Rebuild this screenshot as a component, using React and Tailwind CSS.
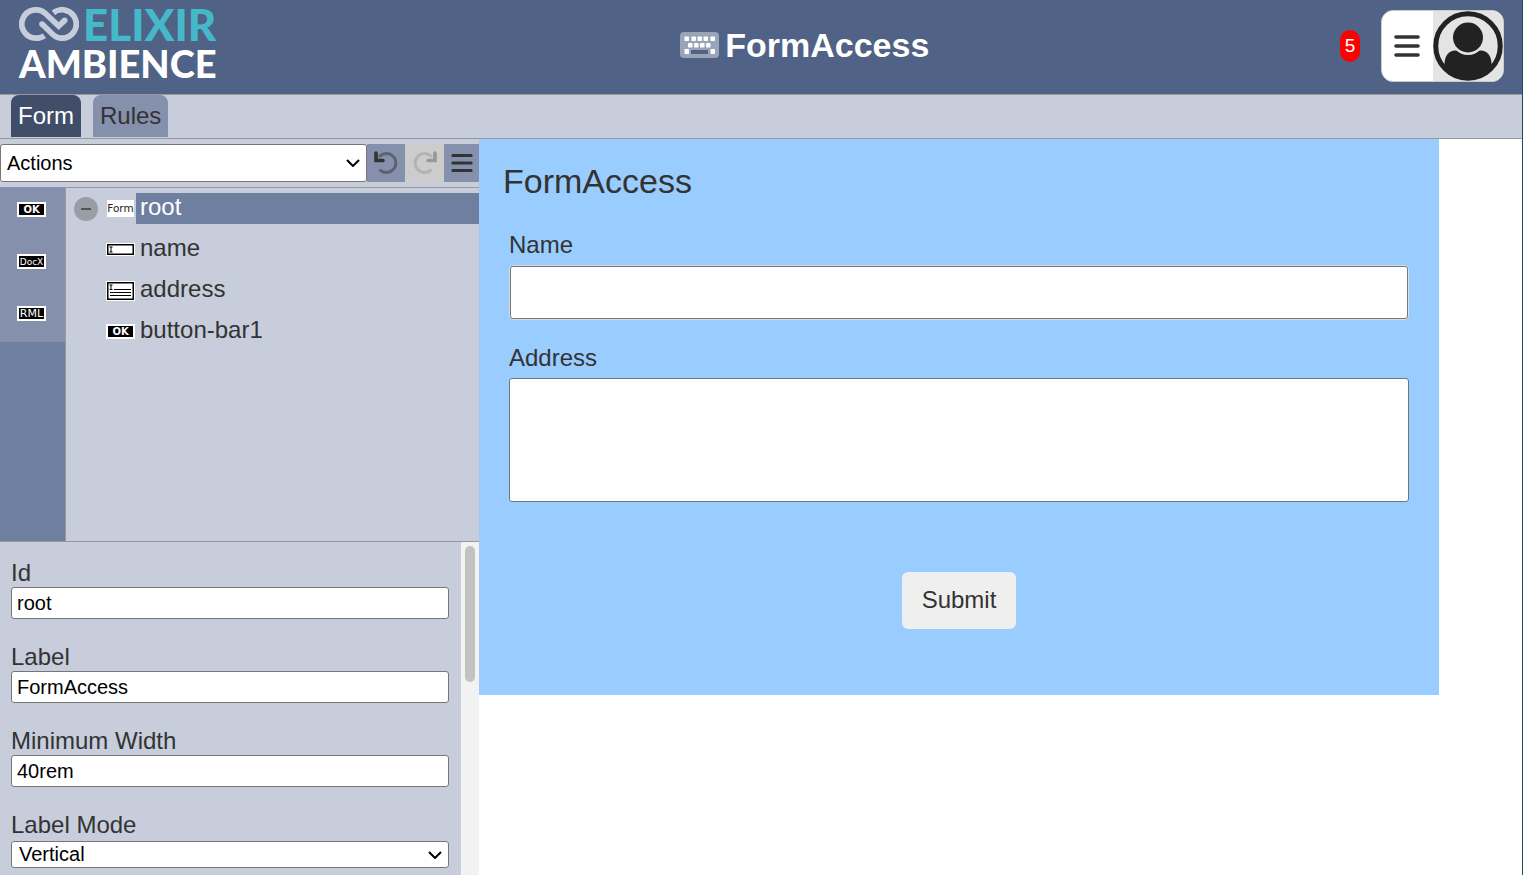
import React from "react";

function Logo() {
  return (
    <div className="flex flex-col self-start pt-1 font-['Lato',sans-serif] font-black text-white">
      <div className="flex h-10 items-center gap-1 text-[44px] leading-10 text-[#45b9c9]">
        <svg viewBox="0 0 180 102" className="mb-px h-[34px] w-[60px]" fill="none" stroke="#c7cddb" strokeWidth="17" aria-hidden="true">
          <path d="M76 86C68 92 60 93.500 51 93.500A42.500 42.500 0 1 1 81 21L119 57L137 40" />
          <path d="M69 51L100 81C110 91 120 93.500 129 93.500A42.500 42.500 0 1 0 103 17.500" />
          <g fill="#c7cddb" stroke="none">
            <circle cx="69" cy="51" r="8.500" />
            <circle cx="137" cy="40" r="8.500" />
          </g>
        </svg>
        <span>ELIXIR</span>
      </div>
      <span className="text-[38px] leading-[38px]">AMBIENCE</span>
    </div>
  );
}

function Keyboard() {
  const top = [4, 11, 17, 23, 30];
  const mid = [8, 14, 20, 26];
  return (
    <svg viewBox="0 0 39 26" className="h-[26px] w-[39px]" fill="#fff" aria-hidden="true">
      <rect width="39" height="26" rx="4" fillOpacity=".42" />
      {top.map((x) => <rect key={x} x={x + 0.5} y="4.5" width="4.5" height="4.5" rx=".7" />)}
      {mid.map((x) => <rect key={x} x={x} y="11" width="4.5" height="4.5" rx=".7" />)}
      <rect x="4.5" y="17" width="4.5" height="5" rx=".7" />
      <rect x="30.5" y="17" width="4.5" height="5" rx=".7" />
      <rect x="11" y="18" width="17" height="4" fill="#506285" />
    </svg>
  );
}

function Bars({ className }) {
  return (
    <svg viewBox="0 0 26 24" className={className} stroke="#333" strokeWidth="3.6" strokeLinecap="round" aria-hidden="true">
      <path d="M2 3h22M2 12h22M2 21h22" />
    </svg>
  );
}

function Undo({ className }) {
  return (
    <svg viewBox="0 0 24 24" className={className} fill="none" stroke="currentColor" aria-hidden="true">
      <path d="M6 5A9.500 9.500 0 1 1 6.500 19.500" strokeWidth="3" strokeOpacity=".5" strokeLinecap="round" />
      <path d="M2 2v7.500H9" strokeWidth="3.6" strokeLinecap="round" strokeLinejoin="miter" />
    </svg>
  );
}

function Chip({ text, size, bold }) {
  return (
    <svg viewBox="0 0 29 15" className="h-[15px] w-[29px] shrink-0" aria-hidden="true">
      <rect width="29" height="15" fill="#fff" />
      <rect x="2" y="2" width="25" height="11" fill="#000" />
      <text x="14.5" y="11" textAnchor="middle" fill="#fff" fontFamily="DejaVu Sans" fontSize={size} fontWeight={bold ? 700 : 400}>{text}</text>
    </svg>
  );
}

function FieldIcon() {
  return (
    <svg viewBox="0 0 29 13" className="h-[13px] w-[29px]" aria-hidden="true">
      <rect width="29" height="13" fill="#fff" />
      <rect x="1.75" y="1.75" width="25.5" height="9.5" fill="#fff" stroke="#000" strokeWidth="1.5" />
      <path d="M3.500 4h3M5 4v5M3.500 9h3" stroke="#000" />
    </svg>
  );
}

function AreaIcon() {
  return (
    <svg viewBox="0 0 29 20" className="h-5 w-[29px]" aria-hidden="true">
      <rect width="29" height="20" fill="#fff" />
      <rect x="1.75" y="1.75" width="25.5" height="16.5" fill="#fff" stroke="#000" strokeWidth="1.5" />
      <path d="M3.500 4h3M5 4v5M3.500 8.500h3M8 8.500h17M4 11.500h21M4 14.500h21" stroke="#000" />
    </svg>
  );
}

function FormIcon() {
  return (
    <svg viewBox="0 0 29 17" className="h-[17px] w-[29px]" aria-hidden="true">
      <rect x="1" width="27" height="17" fill="#fff" />
      <text x="14.500" y="12" textAnchor="middle" fontFamily="DejaVu Sans" fontSize="10.5" fill="#222">Form</text>
    </svg>
  );
}

function Chevron() {
  return (
    <svg viewBox="0 0 14 8" className="pointer-events-none absolute right-[7px] top-1/2 h-2 w-[14px] -translate-y-1/2" fill="none" stroke="#000" strokeWidth="2" aria-hidden="true">
      <path d="M1 1l6 6 6-6" />
    </svg>
  );
}

function Avatar() {
  return (
    <svg viewBox="0 0 70 70" className="h-[70px] w-[70px]" aria-hidden="true">
      <defs>
        <clipPath id="disc"><circle cx="35" cy="35" r="33" /></clipPath>
      </defs>
      <rect width="70" height="70" fill="#e4e4e4" />
      <g clipPath="url(#disc)">
        <path d="M11.500 70V52C12 44 16 40 22 39.500H48C54 40 58 44 58.500 52V70Z" fill="#222" />
      </g>
      <circle cx="35" cy="26.500" r="17.500" fill="#e4e4e4" />
      <circle cx="35" cy="26.500" r="15" fill="#222" />
      <circle cx="35" cy="35" r="32.250" fill="none" stroke="#222" strokeWidth="5" />
    </svg>
  );
}

const tree = [
  { id: "name", icon: <FieldIcon /> },
  { id: "address", icon: <AreaIcon /> },
  { id: "button-bar1", icon: <Chip text="OK" size={10} bold /> },
];

const properties = [
  { id: "prop-id", label: "Id", value: "root" },
  { id: "prop-label", label: "Label", value: "FormAccess" },
  { id: "prop-width", label: "Minimum Width", value: "40rem" },
];

export default function App() {
  return (
    <div className="flex h-screen flex-col overflow-hidden border-r border-[#1c4a59] bg-white font-['Liberation_Sans',Arial,sans-serif] text-2xl text-[#333]">
      <header className="flex h-[95px] shrink-0 items-center border-b border-[#999] bg-[#506285] pb-0.5 pl-[19px] pr-[18px]">
        <Logo />
        <h1 className="flex flex-1 items-center justify-center gap-1.5 pb-0.5 pl-[53px] text-[34px] font-bold leading-10 text-white">
          <Keyboard />
          FormAccess
        </h1>
        <div className="flex items-center justify-end gap-[21px]">
          <span className="flex h-8 w-5 items-center justify-center rounded-[10px] bg-[#f00] text-[19px] text-white">5</span>
          <button aria-label="User menu" className="flex h-[72px] items-center overflow-hidden rounded-xl border border-[#ccc] bg-white pl-3">
            <Bars className="mr-[13px] h-6 w-[26px]" />
            <Avatar />
          </button>
        </div>
      </header>

      <nav className="flex h-11 shrink-0 gap-3 border-b border-[#999] bg-[#c7cddb] pl-[11px]">
        <button className="h-[42px] rounded-t-lg bg-[#404e6a] px-[7px] text-white">Form</button>
        <button className="h-[42px] rounded-t-lg bg-[#8490ac] px-[7px]">Rules</button>
      </nav>

      <div className="flex min-h-0 flex-1">
        <aside className="flex w-[479px] shrink-0 flex-col bg-[#c7cddb]">
          <div className="flex py-[5px]">
            <div className="relative flex-1">
              <select aria-label="Actions" className="h-[38px] w-full appearance-none rounded-[3px] border border-[#767676] bg-white pl-1.5 text-xl leading-6 text-black">
                <option>Actions</option>
              </select>
              <Chevron />
            </div>
            <button aria-label="Undo" className="flex w-[38px] items-center justify-center bg-[#8490ac]">
              <Undo className="size-6" />
            </button>
            <button aria-label="Redo" disabled className="flex w-[39px] items-center justify-center bg-[#ccc] text-[#999]">
              <Undo className="size-6 -scale-x-100" />
            </button>
            <button aria-label="Menu" className="flex w-[35px] items-center justify-center bg-[#8490ac]">
              <Bars className="h-5 w-[22px]" />
            </button>
          </div>

          <div className="flex h-[354px] shrink-0">
            <div className="w-[66px] border-r border-[#999] bg-[#6f7f9f]">
              <div className="flex h-[155px] flex-col items-center gap-[37px] bg-[#8490ac] pr-0.5 pt-[15px]">
                <button aria-label="Button bar" className="flex"><Chip text="OK" size={10} bold /></button>
                <button aria-label="DocX" className="flex"><Chip text="DocX" size={9} /></button>
                <button aria-label="RML" className="flex"><Chip text="RML" size={11} /></button>
              </div>
            </div>
            <ul className="flex flex-1 flex-col gap-2.5 border-t border-[#999] pt-[5px]">
              <li className="flex h-[31px] items-center">
                <button aria-label="Collapse root" className="ml-2 mr-2 flex size-6 items-center justify-center rounded-full bg-[#999da5]">
                  <span className="h-0.5 w-2.5 bg-[#555]" />
                </button>
                <FormIcon />
                <span className="ml-px h-[31px] flex-1 bg-[#6f7f9f] pl-1 leading-7 text-white">root</span>
              </li>
              {tree.map((node) => (
                <li key={node.id} className="flex h-[31px] items-center pl-10">
                  {node.icon}
                  <span className="ml-px h-[31px] flex-1 pl-1 leading-7">{node.id}</span>
                </li>
              ))}
            </ul>
          </div>

          <div className="flex min-h-0 flex-1 overflow-hidden border-t border-[#999]">
            <div className="flex flex-1 flex-col gap-6 pl-[11px] pr-3 pt-[17px]">
              {properties.map((p) => (
                <div key={p.id} className="flex flex-col">
                  <label htmlFor={p.id} className="leading-7">{p.label}</label>
                  <input id={p.id} defaultValue={p.value} className="h-8 rounded-[3px] border border-[#767676] bg-white px-[5px] text-xl leading-6 text-black" />
                </div>
              ))}
              <div className="flex flex-col">
                <label htmlFor="prop-mode" className="leading-7">Label Mode</label>
                <div className="relative mt-0.5">
                  <select id="prop-mode" className="block h-[27px] w-full appearance-none rounded-[3px] border border-[#767676] bg-white pb-0.5 pl-[7px] text-xl leading-6 text-black">
                    <option>Vertical</option>
                  </select>
                  <Chevron />
                </div>
              </div>
            </div>
            <div className="w-[18px] bg-[#f2f2f2] px-1 pt-1">
              <div className="h-[136px] rounded-full bg-[#c2c2c2]" />
            </div>
          </div>
        </aside>

        <main className="min-w-0 flex-1 pr-[83px]">
          <form className="flex flex-col bg-[#99ccff] px-[30px] pb-[66px] pt-[22px]">
            <h2 className="-ml-1.5 text-[34px] leading-10">FormAccess</h2>
            <label htmlFor="name" className="mt-7 leading-8">Name</label>
            <div className="mt-1 rounded-[5px] border border-[#ddd] bg-white">
              <input id="name" className="block h-[53px] w-full rounded-[3px] border border-[#767676] bg-white px-2" />
            </div>
            <label htmlFor="address" className="mt-[22px] leading-8">Address</label>
            <textarea id="address" className="mt-1 h-[124px] resize-none rounded-[3px] border border-[#767676] bg-white p-2" />
            <button type="button" className="mt-[70px] h-[57px] self-center rounded-md bg-[#efefef] px-5 pb-0.5">Submit</button>
          </form>
        </main>
      </div>
    </div>
  );
}
